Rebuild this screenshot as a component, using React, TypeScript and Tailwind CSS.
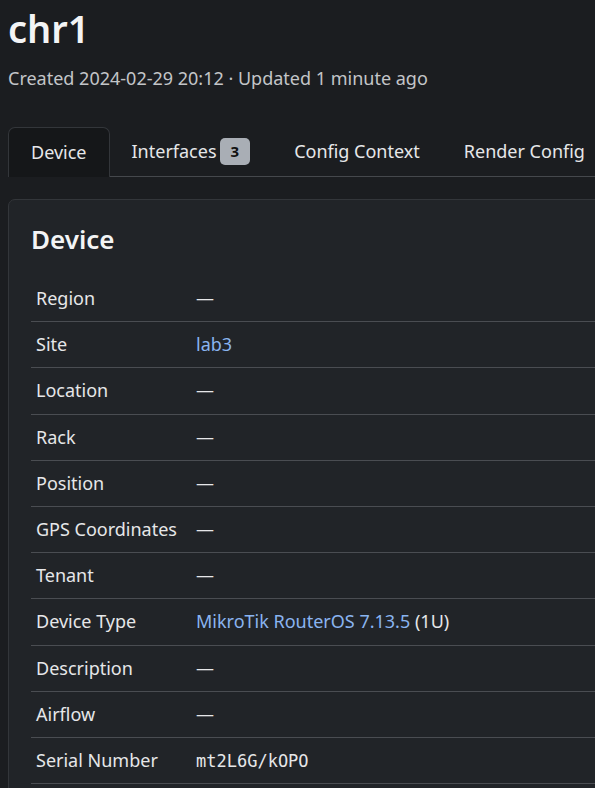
import React from 'react';

interface Row {
  label: string;
  value?: React.ReactNode;
}

const dash = <span className="text-[#e6e7e9]">—</span>;

const rows: Row[] = [
  { label: 'Region' },
  { label: 'Site', value: <a className="text-[#8ab4f0]">lab3</a> },
  { label: 'Location' },
  { label: 'Rack' },
  { label: 'Position' },
  { label: 'GPS Coordinates' },
  { label: 'Tenant' },
  {
    label: 'Device Type',
    value: (
      <span>
        <a className="text-[#8ab4f0]">MikroTik RouterOS 7.13.5</a> (1U)
      </span>
    ),
  },
  { label: 'Description' },
  { label: 'Airflow' },
  {
    label: 'Serial Number',
    value: <span className="font-['DejaVu_Sans_Mono',monospace] text-[17px]">mt2L6G/kOPO</span>,
  },
  { label: 'Asset Tag' },
  { label: 'Config Template' },
];

const tabs = ['Device', 'Interfaces', 'Config Context', 'Render Config', 'Journal', 'Changelog'];

export default function App() {
  return (
    <div className="w-[595px] h-[788px] overflow-hidden bg-[#1b1d20] font-['Noto_Sans',sans-serif] text-[#e6e7e9]">
      <div className="w-[900px] pl-2">
        <h1 className="text-[38px] font-semibold leading-none pt-[9px] text-[#f3f4f5]">chr1</h1>
        <p className="mt-[22px] text-[18px] leading-none text-[#c3c5c8]">
          Created 2024-02-29 20:12 · Updated 1 minute ago
        </p>

        {/* Tabs */}
        <div className="mt-[40px] flex border-b border-[#45484c] text-[18px]">
          {tabs.map((t, i) => (
            <div
              key={t}
              className={
                i === 0
                  ? 'h-[50px] px-[22px] flex items-center rounded-t-[7px] border border-b-0 border-[#33363a] bg-[#151719] -mb-px'
                  : 'h-[49px] px-[22px] flex items-center'
              }
            >
              {t}
              {t === 'Interfaces' && (
                <span className="ml-[3px] h-[27px] flex items-center rounded-[5px] bg-[#a9aeb5] text-[#111] text-[15px] font-bold px-[11px] leading-none">
                  3
                </span>
              )}
            </div>
          ))}
        </div>

        {/* Card */}
        <div className="mt-[22px] rounded-[7px] border border-[#33363a] bg-[#212428] px-[22px] pt-[22px] pb-[22px]">
          <h2 className="text-[26px] font-semibold text-[#f3f4f5] leading-none pt-[4px] pb-[24px]">Device</h2>
          <div>
            {rows.map((r) => (
              <div key={r.label} className="flex items-center h-[46.2px] border-b border-[#4a4d52] text-[18px]">
                <div className="w-[165px] pl-[5px]">{r.label}</div>
                <div>{r.value ?? dash}</div>
              </div>
            ))}
          </div>
        </div>
      </div>
    </div>
  );
}
